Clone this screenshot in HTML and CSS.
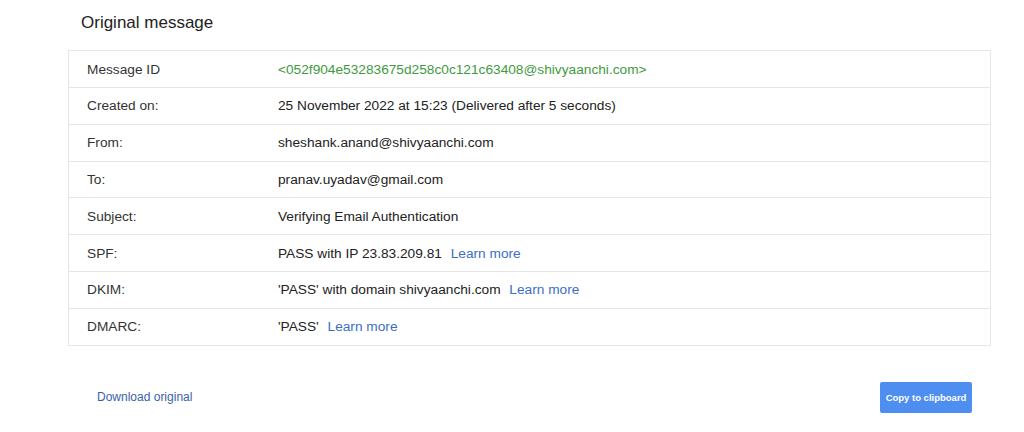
FILE: index.html
```html
<!DOCTYPE html>
<html>
<head>
<meta charset="utf-8">
<link rel="stylesheet" href="styles.css">
</head>
<body>
<div class="page">
  <h1 class="title">Original message</h1>
  <div class="table">
    <div class="row"><div class="label">Message ID</div><div class="value id">&lt;052f904e53283675d258c0c121c63408@shivyaanchi.com&gt;</div></div>
    <div class="row"><div class="label">Created on:</div><div class="value">25 November 2022 at 15:23 (Delivered after 5 seconds)</div></div>
    <div class="row"><div class="label">From:</div><div class="value">sheshank.anand@shivyaanchi.com</div></div>
    <div class="row"><div class="label">To:</div><div class="value">pranav.uyadav@gmail.com</div></div>
    <div class="row"><div class="label">Subject:</div><div class="value">Verifying Email Authentication</div></div>
    <div class="row"><div class="label">SPF:</div><div class="value">PASS with IP 23.83.209.81 <a class="link">Learn more</a></div></div>
    <div class="row"><div class="label">DKIM:</div><div class="value">'PASS' with domain shivyaanchi.com <a class="link">Learn more</a></div></div>
    <div class="row"><div class="label">DMARC:</div><div class="value">'PASS' <a class="link">Learn more</a></div></div>
  </div>
  <div class="footer">
    <a class="download">Download original</a>
    <button class="copy">Copy to clipboard</button>
  </div>
</div>
</body>
</html>
```
FILE: styles.css
```css
html, body {
  margin: 0;
  padding: 0;
  background: #ffffff;
  font-family: "Liberation Sans", Arial, sans-serif;
  color: #222222;
}
.page {
  width: 1024px;
  height: 432px;
  padding-left: 68px;
  box-sizing: border-box;
}
.title {
  margin: 0;
  padding: 12px 0 0 13px;
  height: 50px;
  box-sizing: border-box;
  font-size: 17px;
  font-weight: normal;
  color: #222222;
  line-height: 22px;
}
.table {
  width: 923px;
  border: 1px solid #e6e6e6;
  box-sizing: border-box;
}
.row {
  display: flex;
  align-items: center;
  height: 36.8px;
  border-top: 1px solid #e6e6e6;
  box-sizing: border-box;
  font-size: 13.7px;
}
.row:first-child {
  border-top: none;
  height: 36px;
}
.label {
  width: 191px;
  padding-left: 18px;
  flex-shrink: 0;
  color: #333333;
}
.value {
  color: #222222;
}
.value.id {
  color: #3f9a3f;
}
.link {
  color: #3c6fc4;
  margin-left: 5px;
}
.footer {
  display: flex;
  justify-content: space-between;
  align-items: center;
  width: 904px;
  margin-top: 36px;
  padding-left: 29px;
  box-sizing: border-box;
}
.download {
  font-size: 12px;
  color: #3b62a8;
}
.copy {
  width: 92px;
  height: 31px;
  border: none;
  border-radius: 2px;
  background: #4d8ef0;
  color: #ffffff;
  font-family: "Liberation Sans", Arial, sans-serif;
  font-size: 9.5px;
  font-weight: bold;
  padding: 0;
}
```
